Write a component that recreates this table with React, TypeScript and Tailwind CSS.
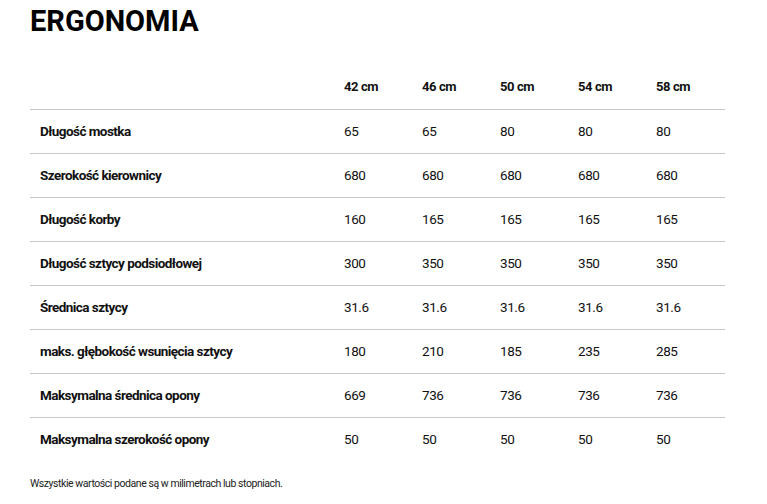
const sizes = ['42 cm', '46 cm', '50 cm', '54 cm', '58 cm']

const rows: { label: string; values: string[] }[] = [
  { label: 'Długość mostka', values: ['65', '65', '80', '80', '80'] },
  { label: 'Szerokość kierownicy', values: ['680', '680', '680', '680', '680'] },
  { label: 'Długość korby', values: ['160', '165', '165', '165', '165'] },
  { label: 'Długość sztycy podsiodłowej', values: ['300', '350', '350', '350', '350'] },
  { label: 'Średnica sztycy', values: ['31.6', '31.6', '31.6', '31.6', '31.6'] },
  { label: 'maks. głębokość wsunięcia sztycy', values: ['180', '210', '185', '235', '285'] },
  { label: 'Maksymalna średnica opony', values: ['669', '736', '736', '736', '736'] },
  { label: 'Maksymalna szerokość opony', values: ['50', '50', '50', '50', '50'] },
]

export default function App() {
  return (
    <div className="w-[767px] h-[504px] bg-white text-[#111] font-['Roboto',sans-serif] overflow-hidden">
      <h1 className="pl-[30px] pt-[4px] h-[65px] text-[29px] font-bold tracking-[0px] leading-[34px] text-black">
        ERGONOMIA
      </h1>
      <table className="ml-[30px] w-[695px] border-collapse table-fixed">
        <colgroup>
          <col className="w-[305px]" />
          <col className="w-[78px]" />
          <col className="w-[78px]" />
          <col className="w-[78px]" />
          <col className="w-[78px]" />
          <col className="w-[78px]" />
        </colgroup>
        <thead>
          <tr className="h-[44px] border-b border-[#c8c8c8]">
            <th />
            {sizes.map(s => (
              <th key={s} className="text-left font-bold text-[13px] tracking-[-0.4px] pl-[9px]">{s}</th>
            ))}
          </tr>
        </thead>
        <tbody>
          {rows.map((r, i) => (
            <tr key={r.label} className={`h-[44px] ${i < rows.length - 1 ? 'border-b border-[#c8c8c8]' : ''}`}>
              <td className="pl-[10px] font-bold text-[13.5px] tracking-[-0.55px]">{r.label}</td>
              {r.values.map((v, j) => (
                <td key={j} className="pl-[9px] text-[13.5px] tracking-[-0.4px]">{v}</td>
              ))}
            </tr>
          ))}
        </tbody>
      </table>
      <p className="pl-[30px] pt-[15px] text-[10.5px] tracking-[-0.45px] text-[#222]">
        Wszystkie wartości podane są w milimetrach lub stopniach.
      </p>
    </div>
  )
}
